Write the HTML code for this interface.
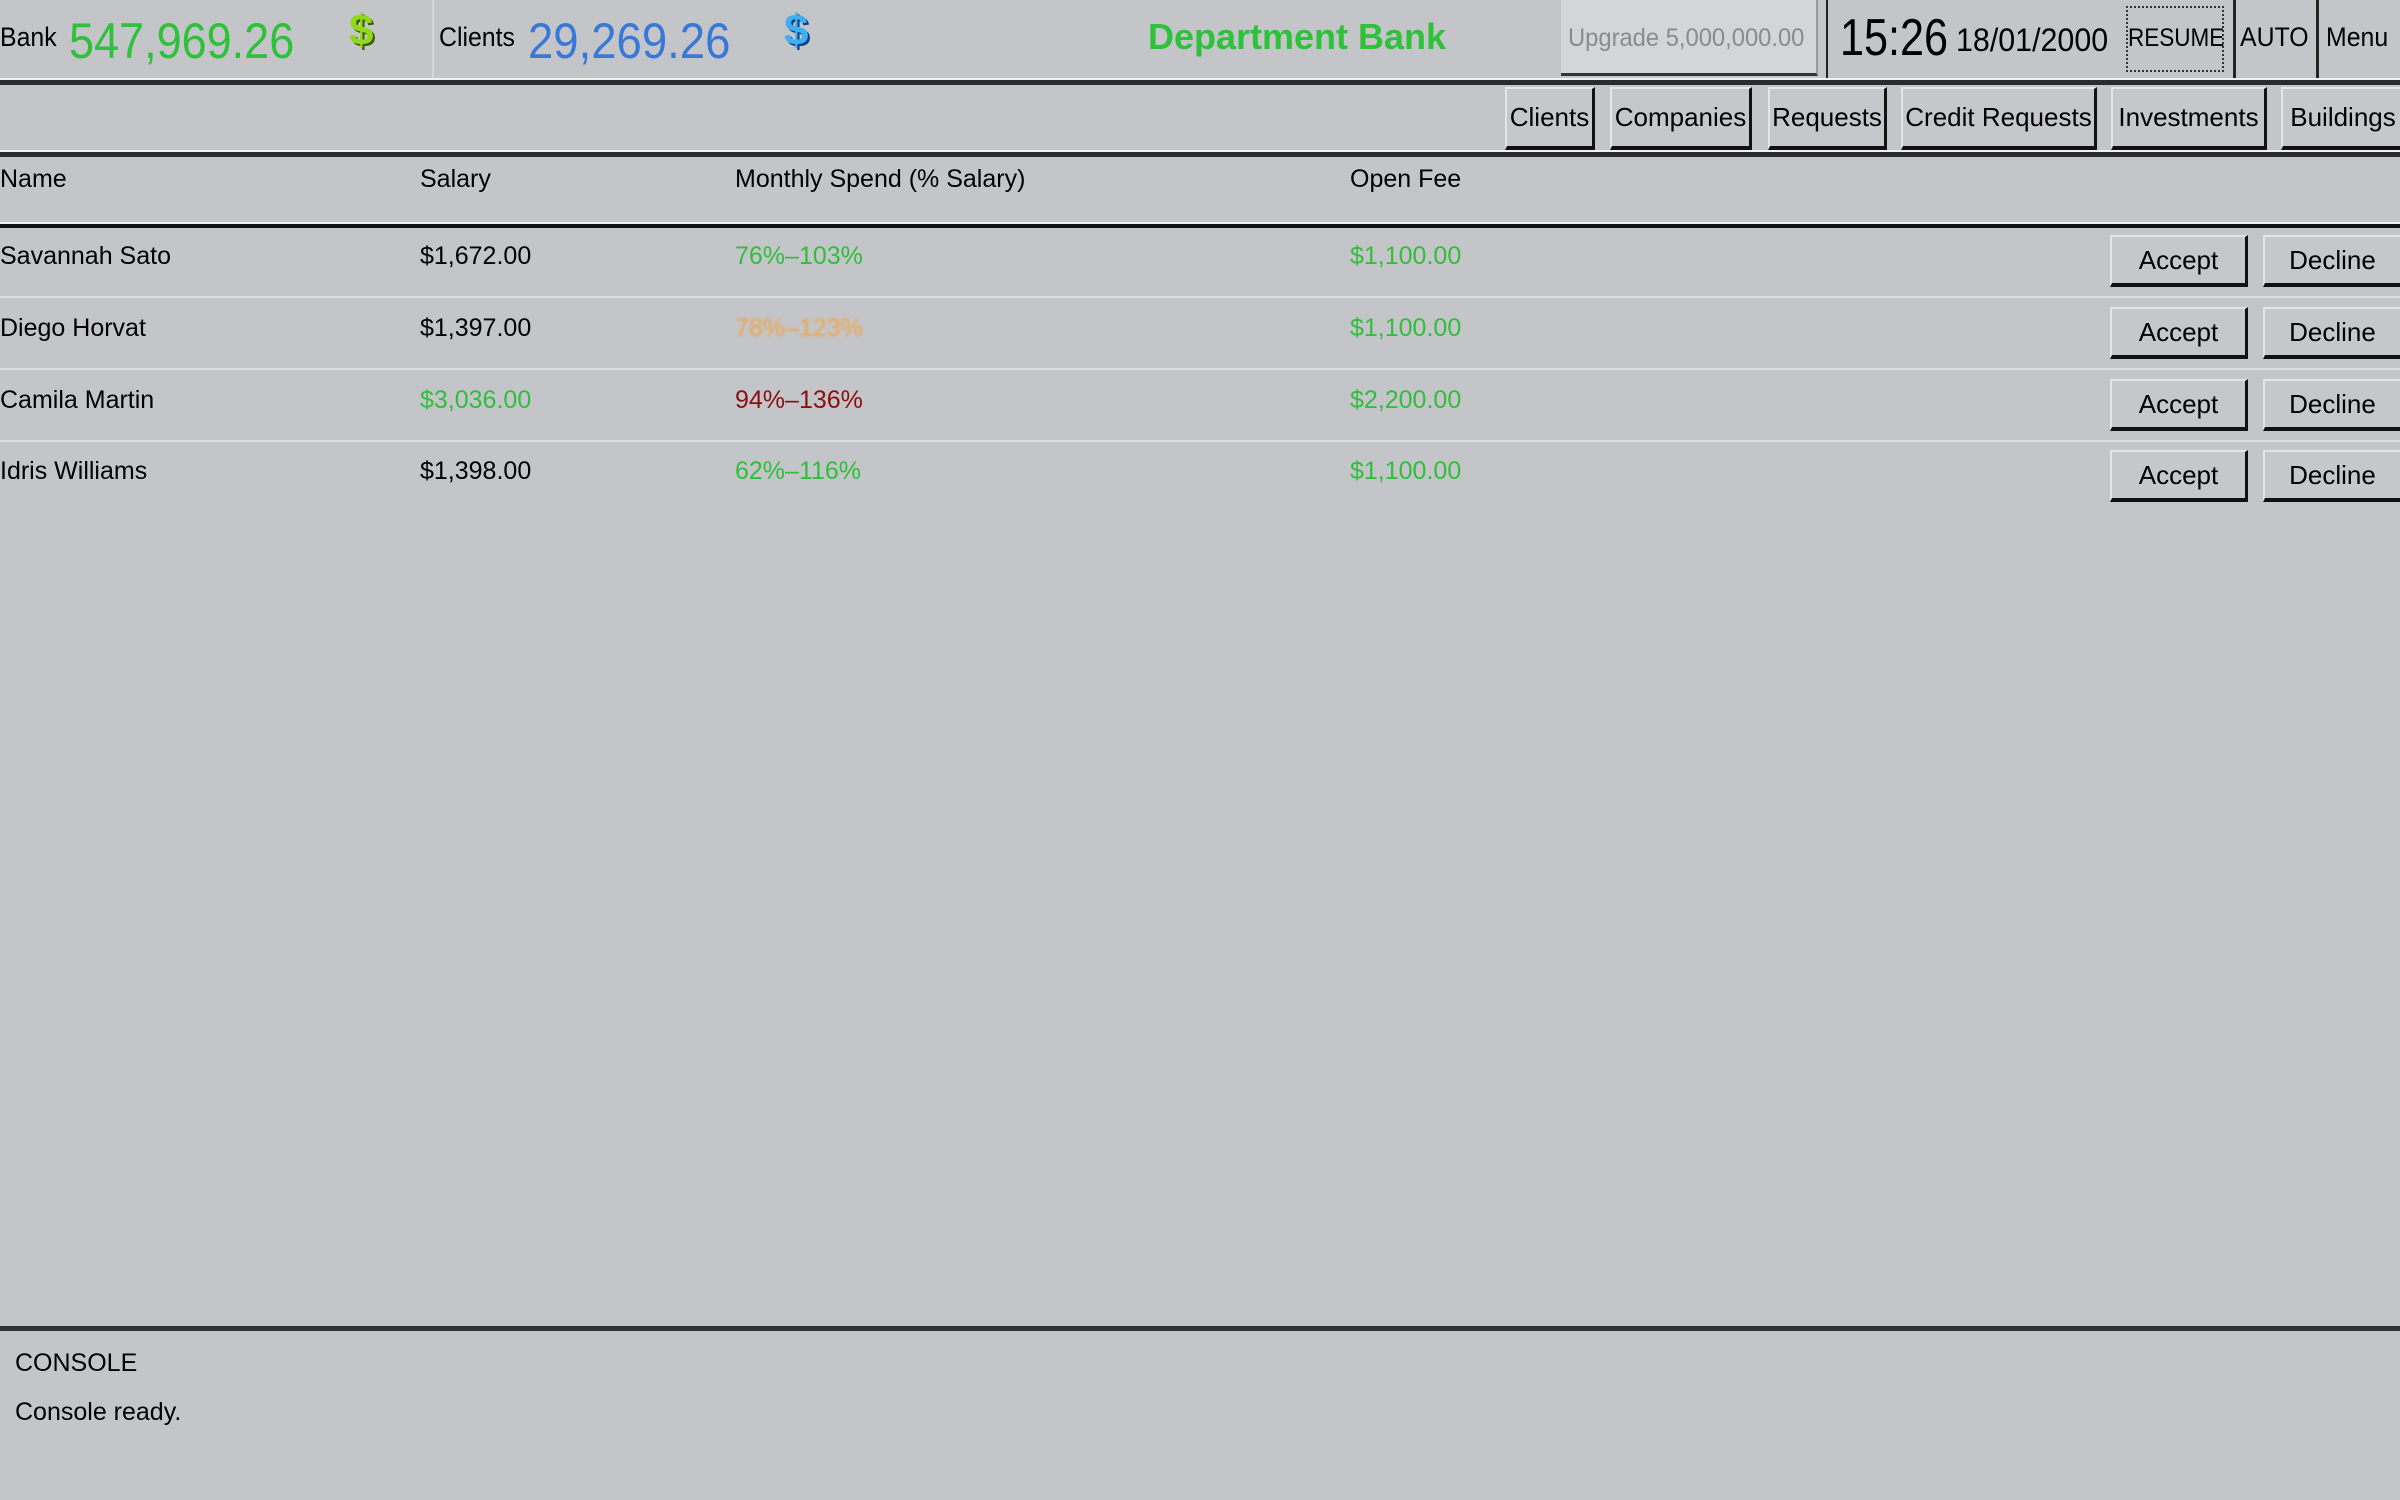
<!DOCTYPE html>
<html><head><meta charset="utf-8"><style>
*{margin:0;padding:0;box-sizing:border-box}
body{width:2400px;height:1500px;background:#c4c5c9;font-family:"Liberation Sans","DejaVu Sans",sans-serif;color:#000;position:relative;overflow:hidden}
.a{position:absolute;white-space:nowrap;transform-origin:left top}
.sep{position:absolute;left:0;width:2400px;background:#2a2b2e}
.btn{position:absolute;background:#c6c7cb;border-top:2px solid #e4e5e8;border-left:2px solid #e4e5e8;border-right:3px solid #111;border-bottom:4px solid #111;display:flex;align-items:center;justify-content:center;font-size:26px;color:#000}
.t{font-size:25px}
.g{color:#2fbf3a}
.rowline{position:absolute;left:0;width:2400px;height:2px;background:#dcdde0}
</style></head><body>
<!-- top bar -->
<div class="a" style="left:0;top:22px;font-size:27px;transform:scaleX(0.92)">Bank</div>
<div class="a" style="left:69px;top:12px;font-size:50px;color:#2ec13a;transform:scaleX(0.9)">547,969.26</div>
<div class="a" style="left:349px;top:6px;font-size:44px;font-weight:bold;color:#8fd81a;text-shadow:2px 2px 0 #3a5a00">$</div>
<div class="a" style="left:432px;top:0;width:2px;height:78px;background:#d5d6d9"></div>
<div class="a" style="left:439px;top:22px;font-size:27px;transform:scaleX(0.92)">Clients</div>
<div class="a" style="left:528px;top:12px;font-size:50px;color:#3a78d8;transform:scaleX(0.91)">29,269.26</div>
<div class="a" style="left:784px;top:6px;font-size:44px;font-weight:bold;color:#3fb0ef;text-shadow:2px 2px 0 #0a3a80">$</div>
<div class="a" style="left:1148px;top:16px;font-size:36px;font-weight:bold;color:#2ec13a">Department Bank</div>
<div class="a" style="left:1561px;top:0;width:257px;height:76px;background:#d4d5d9;border-bottom:3px solid #333;border-right:2px solid #999"></div>
<div class="a" style="left:1568px;top:24px;font-size:25px;color:#8a8b8e;transform:scaleX(0.95)">Upgrade 5,000,000.00</div>
<div class="a" style="left:1826px;top:0;width:2px;height:78px;background:#222"></div>
<div class="a" style="left:1840px;top:8px;font-size:52px;transform:scaleX(0.83)">15:26</div>
<div class="a" style="left:1956px;top:22px;font-size:32px;transform:scaleX(0.95)">18/01/2000</div>
<div class="a" style="left:2126px;top:6px;width:98px;height:66px;border:2px dotted #333"></div>
<div class="a" style="left:2128px;top:24px;font-size:25px;transform:scaleX(0.9)">RESUME</div>
<div class="a" style="left:2233px;top:0;width:3px;height:78px;background:#222"></div>
<div class="a" style="left:2240px;top:22px;font-size:27px;transform:scaleX(0.92)">AUTO</div>
<div class="a" style="left:2316px;top:0;width:3px;height:78px;background:#222"></div>
<div class="a" style="left:2326px;top:22px;font-size:27px;transform:scaleX(0.92)">Menu</div>
<div class="sep" style="top:78px;height:7px;border-top:2px solid #f0f0f0"></div>
<!-- tabs -->
<div class="btn" style="left:1505px;top:87px;width:90px;height:63px">Clients</div>
<div class="btn" style="left:1610px;top:87px;width:142px;height:63px">Companies</div>
<div class="btn" style="left:1768px;top:87px;width:119px;height:63px">Requests</div>
<div class="btn" style="left:1901px;top:87px;width:196px;height:63px">Credit Requests</div>
<div class="btn" style="left:2111px;top:87px;width:156px;height:63px">Investments</div>
<div class="btn" style="left:2281px;top:87px;width:125px;height:63px">Buildings</div>
<div class="sep" style="top:150px;height:7px;border-top:2px solid #f0f0f0"></div>
<!-- header -->
<div class="a t" style="left:0;top:165px">Name</div>
<div class="a t" style="left:420px;top:165px">Salary</div>
<div class="a t" style="left:735px;top:165px">Monthly Spend (% Salary)</div>
<div class="a t" style="left:1350px;top:165px">Open Fee</div>
<div class="sep" style="top:222px;height:6px;background:#111;border-top:2px solid #f0f0f0"></div>
<!-- rows -->
<div class="a t" style="left:0;top:242px">Savannah Sato</div>
<div class="a t" style="left:420px;top:242px">$1,672.00</div>
<div class="a t g" style="left:735px;top:242px">76%–103%</div>
<div class="a t g" style="left:1350px;top:242px">$1,100.00</div>
<div class="rowline" style="top:296px"></div>
<div class="a t" style="left:0;top:314px">Diego Horvat</div>
<div class="a t" style="left:420px;top:314px">$1,397.00</div>
<div class="a t" style="left:735px;top:314px;color:#f0a548;filter:blur(1px)">78%–123%</div>
<div class="a t g" style="left:1350px;top:314px">$1,100.00</div>
<div class="rowline" style="top:368px"></div>
<div class="a t" style="left:0;top:386px">Camila Martin</div>
<div class="a t g" style="left:420px;top:386px">$3,036.00</div>
<div class="a t" style="left:735px;top:386px;color:#8a1010">94%–136%</div>
<div class="a t g" style="left:1350px;top:386px">$2,200.00</div>
<div class="rowline" style="top:440px"></div>
<div class="a t" style="left:0;top:457px">Idris Williams</div>
<div class="a t" style="left:420px;top:457px">$1,398.00</div>
<div class="a t g" style="left:735px;top:457px">62%–116%</div>
<div class="a t g" style="left:1350px;top:457px">$1,100.00</div>
<!-- buttons -->
<div class="btn" style="left:2110px;top:235px;width:138px;height:52px">Accept</div>
<div class="btn" style="left:2263px;top:235px;width:140px;height:52px">Decline</div>
<div class="btn" style="left:2110px;top:307px;width:138px;height:52px">Accept</div>
<div class="btn" style="left:2263px;top:307px;width:140px;height:52px">Decline</div>
<div class="btn" style="left:2110px;top:379px;width:138px;height:52px">Accept</div>
<div class="btn" style="left:2263px;top:379px;width:140px;height:52px">Decline</div>
<div class="btn" style="left:2110px;top:450px;width:138px;height:52px">Accept</div>
<div class="btn" style="left:2263px;top:450px;width:140px;height:52px">Decline</div>
<!-- console -->
<div class="sep" style="top:1326px;height:5px;background:#333"></div>
<div class="a t" style="left:15px;top:1349px">CONSOLE</div>
<div class="a t" style="left:15px;top:1398px">Console ready.</div>
</body></html>
